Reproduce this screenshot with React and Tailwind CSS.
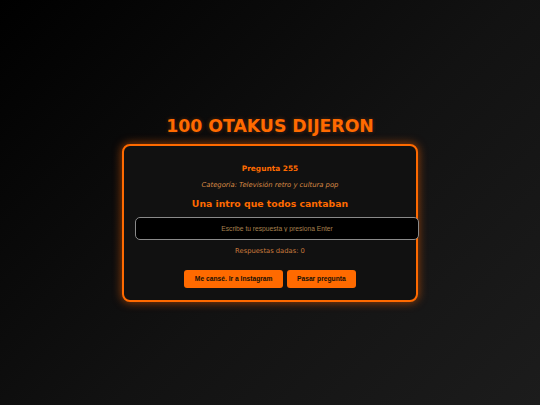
import React from 'react';

export default function App() {
  return (
    <div className="min-h-screen w-full bg-[linear-gradient(135deg,#000000_0%,#121212_55%,#1c1c1c_100%)] flex flex-col items-center pt-[116px] font-['DejaVu_Sans',Verdana,sans-serif]">
      <h1 className="text-[17.3px] leading-[20px] font-bold text-[#ff6a00] [text-shadow:0_0_4px_rgba(255,102,0,0.3)]">
        100 OTAKUS DIJERON
      </h1>

      <div className="mt-[8px] w-[296px] box-border border-2 border-[#ff6a00] rounded-[8px] bg-[#111111] shadow-[0_0_8px_1px_rgba(255,102,0,0.5)] px-[11px] pt-[18px] pb-[12px] flex flex-col">
        <p className="text-center text-[7.4px] leading-[10px] font-bold text-[#ff6a00]">Pregunta 255</p>
        <p className="mt-[6px] text-center text-[6.8px] leading-[10px] italic text-[#d88a45]">
          Categoría: Televisión retro y cultura pop
        </p>
        <p className="mt-[8px] text-center text-[9.3px] leading-[12px] font-bold text-[#ff6a00]">
          Una intro que todos cantaban
        </p>
        <input
          autoFocus
          placeholder="Escribe tu respuesta y presiona Enter"
          className="mt-[7px] shrink-0 w-[284px] h-[23px] box-border bg-black border border-[#8a8a8a] rounded-[5px] text-center text-[6.7px] text-[#e5e5e5] caret-[#e5e5e5] placeholder:text-[#a8804f] outline-none font-['Liberation_Sans',Arial,sans-serif]"
        />
        <p className="mt-[6px] text-center text-[6.75px] leading-[10px] text-[#c97a3c]">Respuestas dadas: 0</p>
        <div className="mt-[14px] flex justify-center gap-[4px] font-['Liberation_Sans',Arial,sans-serif]">
          <button className="h-[18px] px-[10.5px] rounded-[3px] bg-[#ff6a00] text-[#161006] text-[6.7px] leading-[8px] font-bold whitespace-nowrap">
            Me cansé. Ir a Instagram
          </button>
          <button className="h-[18px] px-[10px] rounded-[3px] bg-[#ff6a00] text-[#161006] text-[6.7px] leading-[8px] font-bold whitespace-nowrap">
            Pasar pregunta
          </button>
        </div>
      </div>
    </div>
  );
}
